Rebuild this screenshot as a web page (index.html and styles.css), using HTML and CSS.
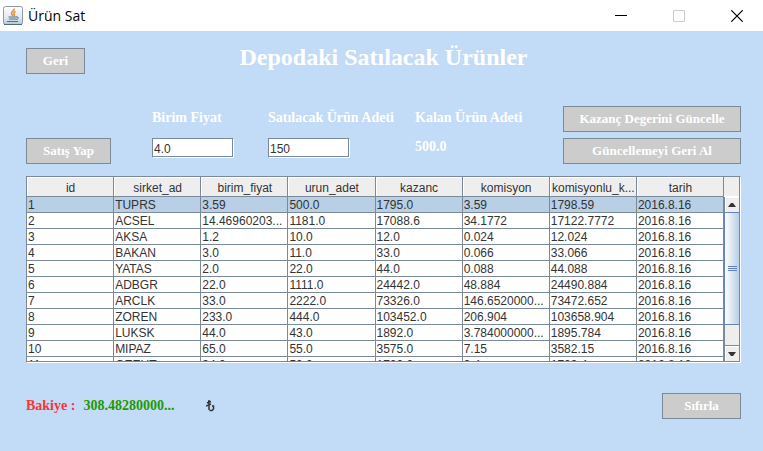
FILE: index.html
```html
<!DOCTYPE html>
<html lang="tr">
<head>
<meta charset="utf-8">
<title>Ürün Sat</title>
<link rel="stylesheet" href="styles.css">
</head>
<body>
<header class="titlebar">
  <svg class="app-icon" width="20" height="20" viewBox="0 0 20 20" aria-hidden="true">
    <defs><linearGradient id="tile" x1="0" y1="0" x2="0" y2="1"><stop offset="0" stop-color="#fff"/><stop offset=".6" stop-color="#e4eaf0"/><stop offset="1" stop-color="#b9c6d2"/></linearGradient></defs>
    <rect x=".5" y=".5" width="19" height="18" rx="2" fill="url(#tile)" stroke="#8b9aa8"/>
    <path d="M1 18.500h18" stroke="#4d6b85"/>
    <path d="M11 2.500c1 2-3 3-2.500 5 .2 1 1 1.500 1 2.500M12.500 5.500c-2 1-2 2-1.200 3 .5.800-.3 1.500-.8 2" fill="none" stroke="#ee8a35" stroke-width="1.500"/>
    <path d="M5.500 11h8M6 13h7M13 11c3-.5 3 2 0 2.500M4 15.500h11" fill="none" stroke="#4f7290"/>
  </svg>
  <span class="titlebar-text">Ürün Sat</span>
  <div class="window-controls">
    <button type="button" aria-label="Simge durumuna küçült"><svg width="12" height="12" viewBox="0 0 12 12"><path d="M0 5.500h12" stroke="#000"/></svg></button>
    <button type="button" aria-label="Ekranı kapla" disabled><svg width="12" height="12" viewBox="0 0 12 12"><path d="M.5.500h11v11H.5z" fill="none" stroke="#ccc"/></svg></button>
    <button type="button" aria-label="Kapat"><svg width="12" height="12" viewBox="0 0 12 12"><path d="M.3.300l11.400 11.400M11.700.300L.3 11.700" stroke="#000" stroke-width="1.200"/></svg></button>
  </div>
</header>
<main class="content">
  <div class="heading">
    <button type="button" class="btn">Geri</button>
    <h1>Depodaki Satılacak Ürünler</h1>
  </div>
  <form class="sale">
    <button type="button" class="btn sell">Satış Yap</button>
    <div class="field price"><label for="price">Birim Fiyat</label><input id="price" type="text" value="4.0"></div>
    <div class="field amount"><label for="amount">Satılacak Ürün Adeti</label><input id="amount" type="text" value="150"></div>
    <div class="field"><label for="left">Kalan Ürün Adeti</label><output id="left">500.0</output></div>
    <div class="updates">
      <button type="button" class="btn">Kazanç Degerini Güncelle</button>
      <button type="button" class="btn">Güncellemeyi Geri Al</button>
    </div>
  </form>
  <section class="pane">
    <div class="viewport">
      <table>
        <thead><tr><th>id</th><th>sirket_ad</th><th>birim_fiyat</th><th>urun_adet</th><th>kazanc</th><th>komisyon</th><th>komisyonlu_k...</th><th>tarih</th></tr></thead>
        <tbody>
          <tr class="selected"><td>1</td><td>TUPRS</td><td>3.59</td><td>500.0</td><td>1795.0</td><td>3.59</td><td>1798.59</td><td>2016.8.16</td></tr>
          <tr><td>2</td><td>ACSEL</td><td>14.46960203...</td><td>1181.0</td><td>17088.6</td><td>34.1772</td><td>17122.7772</td><td>2016.8.16</td></tr>
          <tr><td>3</td><td>AKSA</td><td>1.2</td><td>10.0</td><td>12.0</td><td>0.024</td><td>12.024</td><td>2016.8.16</td></tr>
          <tr><td>4</td><td>BAKAN</td><td>3.0</td><td>11.0</td><td>33.0</td><td>0.066</td><td>33.066</td><td>2016.8.16</td></tr>
          <tr><td>5</td><td>YATAS</td><td>2.0</td><td>22.0</td><td>44.0</td><td>0.088</td><td>44.088</td><td>2016.8.16</td></tr>
          <tr><td>6</td><td>ADBGR</td><td>22.0</td><td>1111.0</td><td>24442.0</td><td>48.884</td><td>24490.884</td><td>2016.8.16</td></tr>
          <tr><td>7</td><td>ARCLK</td><td>33.0</td><td>2222.0</td><td>73326.0</td><td>146.6520000...</td><td>73472.652</td><td>2016.8.16</td></tr>
          <tr><td>8</td><td>ZOREN</td><td>233.0</td><td>444.0</td><td>103452.0</td><td>206.904</td><td>103658.904</td><td>2016.8.16</td></tr>
          <tr><td>9</td><td>LUKSK</td><td>44.0</td><td>43.0</td><td>1892.0</td><td>3.784000000...</td><td>1895.784</td><td>2016.8.16</td></tr>
          <tr><td>10</td><td>MIPAZ</td><td>65.0</td><td>55.0</td><td>3575.0</td><td>7.15</td><td>3582.15</td><td>2016.8.16</td></tr>
          <tr><td>11</td><td>GEEUT</td><td>34.0</td><td>50.0</td><td>1700.0</td><td>3.4</td><td>1703.4</td><td>2016.8.16</td></tr>
        </tbody>
      </table>
    </div>
    <div class="side">
      <div class="corner"></div>
      <div class="scrollbar">
        <button type="button" class="arrow" aria-label="Yukarı"><svg width="8" height="4" viewBox="0 0 8 4"><path d="M0 4L3 0h2l3 4z" fill="#333"/></svg></button>
        <div class="track"><div class="thumb"><svg width="9" height="6" viewBox="0 0 9 6"><path d="M0 .5h9M0 2.500h9M0 4.500h9" stroke="#6382bf"/></svg></div></div>
        <button type="button" class="arrow" aria-label="Aşağı"><svg width="8" height="4" viewBox="0 0 8 4"><path d="M0 0L3 4h2l3-4z" fill="#333"/></svg></button>
      </div>
    </div>
  </section>
  <footer class="balance">
    <span class="balance-label">Bakiye :</span>
    <span class="balance-value">308.48280000...</span>
    <svg width="9" height="12" viewBox="0 0 9 12" role="img" aria-label="Türk lirası"><path d="M3 0v10M1 3l4-1.500M0 6l5-2M3.500 10.500h2.500L7.500 9V6H6" fill="none" stroke="#333" stroke-width="1.500"/></svg>
    <button type="button" class="btn reset">Sıfırla</button>
  </footer>
</main>
</body>
</html>
```
FILE: styles.css
```css
* { box-sizing: border-box; }

body {
  margin: 0;
  min-height: 100vh;
  background: #c2dbf6;
  color: #333;
  font: 12px/14px "Liberation Sans", Arial, sans-serif;
}

button { padding: 0; font: inherit; }

.titlebar {
  display: flex;
  align-items: center;
  gap: 5px;
  height: 31px;
  padding-left: 3px;
  background: #fff;
  color: #000;
}

.titlebar-text { font: 14px/20px "Open Sans", "Noto Sans", sans-serif; }

.window-controls {
  display: flex;
  gap: 6px;
  align-self: stretch;
  margin-left: auto;
}

.window-controls button {
  display: grid;
  place-items: center;
  width: 52px;
  border: 0;
  background: none;
}

.content { padding: 17px 22px 0 26px; }

.btn {
  height: 26px;
  padding: 0 15px;
  border: 1px solid #7a8a99;
  background: #ccc;
  color: #fff;
  font: bold 13px/24px "Liberation Serif", "Times New Roman", serif;
  white-space: nowrap;
}

.heading {
  display: grid;
  grid-template-columns: 1fr auto 1fr;
  align-items: start;
  justify-items: start;
}

.heading .btn { width: 59px; }

h1 {
  margin: 0;
  color: #fff;
  font: bold 24px/18px "Liberation Serif", "Times New Roman", serif;
}

.sale {
  display: flex;
  align-items: flex-start;
  margin-top: 32px;
}

.sell { width: 85px; margin: 32px 41px 0 0; }
.price { width: 116px; }
.amount { width: 147px; }

.field {
  display: flex;
  flex-direction: column;
  gap: 8px;
  color: #fff;
  font: bold 14px/24px "Liberation Serif", "Times New Roman", serif;
  white-space: nowrap;
}

.field output { line-height: 18px; }

.field input {
  width: 82px;
  height: 20px;
  padding: 1px 1px 0;
  border: 1px solid #7a8a99;
  border-right-color: #fff;
  border-bottom-color: #fff;
  background: #fff;
  box-shadow: inset -1px -1px #7a8a99;
  color: #333;
  font: 12px/18px "Liberation Sans", Arial, sans-serif;
}

.updates {
  display: grid;
  gap: 6px;
  margin-left: auto;
  width: 178px;
}

.updates .btn { padding: 0; }

.pane {
  display: flex;
  height: 187px;
  margin-top: 12px;
  border: 1px solid #7a8a99;
  border-right-color: #fff;
  border-bottom-color: #fff;
  background: #fff;
  box-shadow: inset -1px -1px #7a8a99;
  padding: 0 1px 1px 0;
}

.viewport { flex: 1; overflow: hidden; }

table {
  width: 100%;
  table-layout: fixed;
  border-collapse: separate;
  border-spacing: 0;
}

th, td {
  overflow: hidden;
  padding: 1px 0 0 1px;
  border-right: 1px solid #7a8a99;
  border-bottom: 1px solid #7a8a99;
  text-align: left;
  white-space: nowrap;
}

th {
  height: 20px;
  padding: 2px 0 0 1px;
  background: #eee;
  box-shadow: inset 1px 1px #fff;
  font-weight: normal;
  text-align: center;
}

.selected { background: #b8cfe5; }

.side { display: flex; flex-direction: column; width: 15px; }

.corner { height: 20px; border-bottom: 1px solid #fff; background: #eee; }

.scrollbar {
  display: flex;
  flex: 1;
  flex-direction: column;
  border-left: 1px solid #7a8a99;
  background: #eee;
}

.arrow {
  display: grid;
  place-items: center;
  height: 15px;
  border: 0;
  background: #eee;
  box-shadow: inset 1px 1px #fff;
}

.track {
  flex: 1;
  border-bottom: 1px solid #7a8a99;
}

.thumb {
  display: grid;
  place-items: center;
  height: 85%;
  margin-left: -1px;
  border: 1px solid #6382bf;
  border-right: 0;
  background: linear-gradient(90deg, #fff, #b8cfe5);
}

.balance {
  display: flex;
  align-items: center;
  margin-top: 30px;
  font: bold 14px/24px "Liberation Serif", "Times New Roman", serif;
}

.balance-label { margin-right: 8px; color: #f33; }
.balance-value { margin-right: 32px; color: #290; }
.reset { width: 79px; margin-left: auto; }
```
